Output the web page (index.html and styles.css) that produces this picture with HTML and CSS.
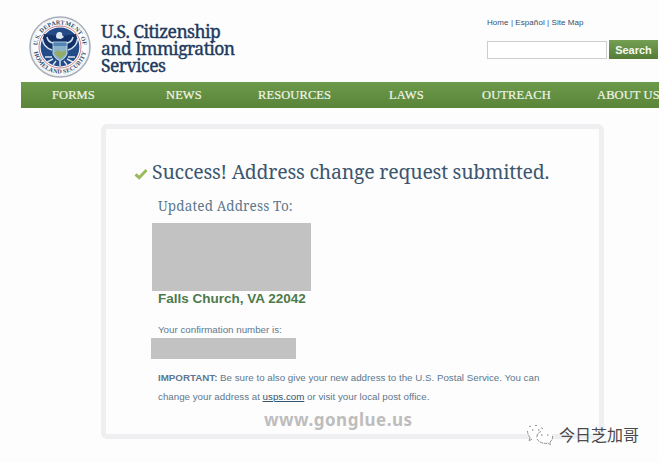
FILE: index.html
```html
<!DOCTYPE html>
<html lang="en">
<head>
  <meta charset="UTF-8" />
  <meta name="viewport" content="width=device-width, initial-scale=1.0" />
  <title>USCIS - Address Change</title>
  <link rel="stylesheet" href="styles.css">
</head>

<body>
  <header class="header">
    <a class="brand">
      <svg class="seal" viewBox="0 0 64 64" width="64" height="64">
        <defs>
          <path id="arcTop" d="M 10.2 39 A 22.8 22.8 0 1 1 53.8 39" />
          <path id="arcBottom" d="M 5.4 32 A 26.6 26.6 0 0 0 58.6 32" />
        </defs>
        <circle cx="32" cy="32" r="30" fill="#fbfcfd" stroke="#a9b0ba" stroke-width="1.6" />
        <circle cx="32" cy="32" r="28.4" fill="none" stroke="#dfe4ea" stroke-width=".6" />
        <text class="seal-text"><textPath href="#arcTop" startOffset="50%" text-anchor="middle" textLength="68">U.S. DEPARTMENT OF</textPath></text>
        <text class="seal-text"><textPath href="#arcBottom" startOffset="50%" text-anchor="middle" textLength="73">HOMELAND SECURITY</textPath></text>
        <circle cx="32" cy="32" r="21" fill="#fff" stroke="#c9808e" stroke-width="1" />
        <circle cx="32" cy="32" r="19.4" fill="#234b87" />
        <!-- eagle -->
        <path d="M29 21 L16 19 Q13 27 20 33 L25 35 L25 29 L39 29 L39 35 L44 33 Q51 27 48 19 L35 21 Z" fill="#123267" />
        <path d="M14.500 24 Q15 32 24 35 M49.500 24 Q49 32 40 35 M19 22 Q20 27 25 28 M45 22 Q44 27 39 28" fill="none" stroke="#d4deec" stroke-width="1.5" />
        <path d="M28 22 Q28 16.500 32 17 Q35 17.500 34 20 L36 22 L33 24 L29 23.500 Z" fill="#dfe8f1" />
        <path d="M24 42 L17 42 M25 44 L19 47 M40 42 L47 42 M39 44 L45 47 M28 46 L25 50 M32 46 V51 M36 46 L39 50" stroke="#dbe4ee" stroke-width="1.4" />
        <path d="M25 27 H39 V39 Q37 44 32 46 Q27 44 25 39 Z" fill="#88b3c9" stroke="#dce8ec" stroke-width=".8" />
        <path d="M25.500 27.500 H38.500 V31 H25.500 Z" fill="#5484b5" />
        <path d="M26 38 L30 35 L34 37 L38 35 V39 L32 44 Z" fill="#97ab68" />
      </svg>
      <span class="brand-name">
        <span>U.S. Citizenship</span>
        <span>and Immigration</span>
        <span>Services</span>
      </span>
    </a>
    <div class="tools">
      <div class="links"><a>Home</a> | <a>Español</a> | <a>Site Map</a></div>
      <form class="search">
        <input class="search-input" type="text" aria-label="Search" />
        <button class="search-btn" type="button">Search</button>
      </form>
    </div>
  </header>

  <nav class="nav">
    <a>FORMS</a>
    <a>NEWS</a>
    <a>RESOURCES</a>
    <a>LAWS</a>
    <a>OUTREACH</a>
    <a>ABOUT US</a>
  </nav>

  <main class="card">
    <div class="title-row">
      <svg class="check" viewBox="0 0 14 12" width="14" height="12">
        <path d="M1.500 6.300 L5.200 9.700 L12.500 2" fill="none" stroke="#9aba5c" stroke-width="3" />
      </svg>
      <h1>Success! Address change request submitted.</h1>
    </div>
    <h2>Updated Address To:</h2>
    <div class="redacted address"></div>
    <p class="city">Falls Church, VA 22042</p>
    <p class="confirm">Your confirmation number is:</p>
    <div class="redacted number"></div>
    <p class="note"><b>IMPORTANT:</b> Be sure to also give your new address to the U.S. Postal Service. You can<br>change your address at <a>usps.com</a> or visit your local post office.</p>
    <div class="site">www.gonglue.us</div>
  </main>

  <div class="account">
    <svg viewBox="0 0 28 22" width="28" height="22">
      <path d="M10 16 Q8 16 6 15 L3 17 L4 13.500 Q1 11 1.500 7 Q3 1.500 10 1.500 Q16 1.500 18 6.500 Q11 7 10 12 Z" fill="#fff" />
      <path d="M18.500 6.800 Q25.500 7 26.500 13 Q26.500 16 24 18 L24.500 20.500 L22 19.300 Q14 21 11 15 Q10 8 18.500 6.800 Z" fill="#fff" />
      <path d="M4 13.500 L3 17 L6 15 M1.500 7 Q1.500 10 4 13.500 M3 2.800 L5 2 M9 1.500 H11 M15 3.500 L17 5 M11 15 Q14 20 22 19.300 L24.500 20.500 L24 18 Q27 15.500 26.500 12 M11 13 Q11 9 15 7.500" fill="none" stroke="#777" stroke-width=".8" stroke-dasharray="3.500 .7" />
      <path d="M6 6 h1.500 M12 6 h1.500 M15 11 h1.500 M21 11 h1.500" stroke="#777" stroke-width="1" />
    </svg>
    <span>今日芝加哥</span>
  </div>
</body>
</html>
```
FILE: styles.css
```css
:root {
  --navy: #1d3a60;
  --slate: #5d788e;
  --gray: #c2c2c2;
}

* {
  box-sizing: border-box;
}

body {
  margin: 0;
  height: 462px;
  overflow: hidden;
  position: relative;
  background: #fdfdfd;
  font-family: "Liberation Sans", Arial, sans-serif;
}

.header {
  display: flex;
  justify-content: space-between;
  height: 82px;
  padding: 15px 1px 0 28px;
}

.brand {
  display: flex;
  gap: 9px;
}

.seal-text {
  font-family: "Liberation Serif", serif;
  font-size: 6.2px;
  font-weight: bold;
  fill: #36506f;
}

.brand-name {
  display: flex;
  flex-direction: column;
  padding-top: 8px;
  font-family: "Noto Serif", "Liberation Serif", serif;
  font-size: 17.5px;
  letter-spacing: -0.55px;
  line-height: 17px;
  color: var(--navy);
  -webkit-text-stroke: 0.4px var(--navy);
  white-space: nowrap;
}

.tools {
  width: 171px;
}

.links {
  padding-top: 2px;
  font-size: 8px;
  line-height: 12px;
  letter-spacing: 0.07px;
  color: #34506b;
  white-space: nowrap;
}

.search {
  display: flex;
  gap: 2px;
  margin-top: 11px;
}

.search-input {
  width: 120px;
  height: 18px;
  margin-top: 1px;
  padding: 0 3px;
  border: 1px solid #cdcdcd;
  background: #fff;
}

.search-btn {
  width: 49px;
  height: 19px;
  padding: 0;
  border: 0;
  background: linear-gradient(#74a052, #557c38);
  color: #f4f8ef;
  font: bold 11px "Liberation Sans", Arial, sans-serif;
}

.nav {
  display: grid;
  grid-template-columns: 114px 92px 131px 93px 115px 1fr;
  height: 26px;
  margin-left: 21px;
  padding-left: 31px;
  background: linear-gradient(#6c994a, #5a8539);
  color: #f0f5e8;
  font: 12.5px/26px "Liberation Serif", serif;
  letter-spacing: 0.1px;
  -webkit-text-stroke: 0.2px #f0f5e8;
  white-space: nowrap;
}

.card {
  width: 503px;
  height: 315px;
  margin: 16px 0 0 101px;
  padding: 31px 0 0 46px;
  border: 5px solid #efeff1;
  border-radius: 6px;
  background: #fdfdfd;
  color: var(--slate);
}

.title-row {
  display: flex;
  align-items: center;
  gap: 4px;
  height: 24px;
  margin-left: -18px;
}

h1 {
  margin: 0;
  font: 19.5px/24px "Noto Serif", "Liberation Serif", serif;
  letter-spacing: -0.23px;
  color: #3c566f;
  white-space: nowrap;
}

.check {
  margin-top: 4px;
}

h2 {
  margin: 12px 0 0 6px;
  font: 13.5px/20px "Noto Serif", "Liberation Serif", serif;
  letter-spacing: 0.15px;
}

.redacted {
  background: var(--gray);
}

.address {
  width: 159px;
  height: 68px;
  margin-top: 7px;
}

.city {
  margin: 0 0 0 6px;
  font-size: 13.5px;
  font-weight: bold;
  line-height: 16px;
  color: #4b7a4b;
}

.confirm {
  margin: 17px 0 0 6px;
  font-size: 9.75px;
  line-height: 12px;
}

.number {
  width: 145px;
  height: 21px;
  margin: 2px 0 0 -1px;
}

.note {
  margin: 9px 0 0 6px;
  font-size: 9.75px;
  line-height: 19px;
  white-space: nowrap;
}

.note a {
  color: #34546e;
  text-decoration: underline;
}

.site {
  margin: 4px 0 0 112px;
  font: bold 17px/20px "Noto Sans", sans-serif;
  letter-spacing: 0.5px;
  color: #bdbdbd;
}

/* account badge, sits over the card's corner */
.account {
  position: absolute;
  left: 526px;
  top: 423px;
  display: flex;
  align-items: center;
  gap: 5px;
  font: 16px/23px "Noto Sans CJK SC", sans-serif;
  color: #4a4a4a;
}
```
